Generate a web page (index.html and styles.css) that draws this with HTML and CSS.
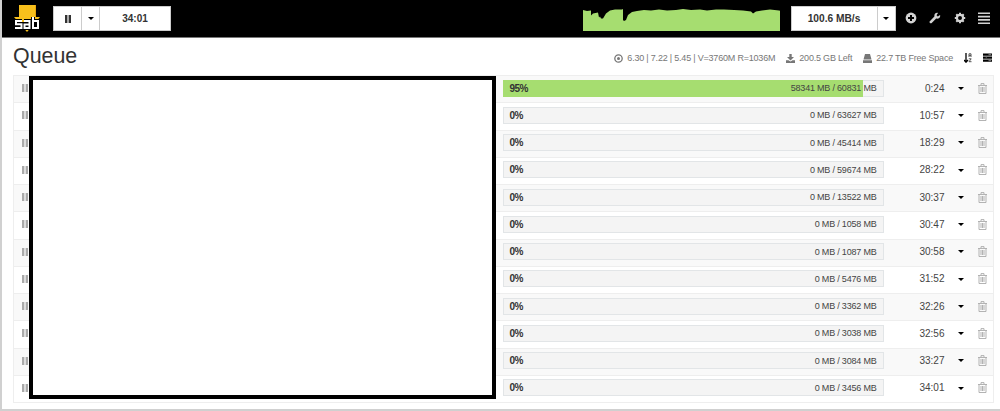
FILE: index.html
```
<!DOCTYPE html>
<html lang="en">
<head>
    <meta charset="UTF-8">
    <meta name="viewport" content="width=device-width, initial-scale=1.0">
    <title>SABnzbd</title>
    <link rel="stylesheet" href="styles.css">
</head>
<body>
    <header class="navbar">
        <svg class="logo" width="26" height="31" viewBox="0 0 26 31">
            <path fill="#f8c01c" d="M5 1h17v12h4L13 28 0 13h5z"/>
            <path fill="#e8a60d" d="M21 1h1v12h-1z"/>
            <path fill="none" stroke="#000" stroke-width="4" d="M8 17H2.500v3H8v4H1M10 17h5.500v7h-5v-3.500h5M19 13v11h5v-7h-5"/>
            <path fill="none" stroke="#fff" stroke-width="2" d="M8 17H2v3.200h5.500V24H1M10 17h5.500v7h-5v-3.500h5M19 13v11h5v-7h-5"/>
        </svg>
        <div class="btn-group">
            <button class="btn pause"><i class="icon-pause"></i></button>
            <button class="btn drop"><i class="caret"></i></button>
            <button class="btn time-left">34:01</button>
        </div>
        <svg class="sparkline" width="197" height="22" viewBox="0 0 197 22">
            <path fill="#a6dd70" d="M0 22V1l4 1 4-.500v5l2-2 5-1 1 5 1-1 1 2h2l3-5 4-3 5-1 7 0V0l1 .500V11l1 1 2-1 2-5 4-3 5-1 7-1 7 .500 8-1 8 1 9-.500 7-1 8 1 9-.500 7 1 9-1 8 0 10 .500 9 .500 8 1 2 2 3-2 6-1 8-1 9 1 7 1 2 2 3-1 5-2 8 0 4 1h4v20z"/>
        </svg>
        <div class="btn-group">
            <button class="btn speed">100.6 MB/s</button>
            <button class="btn drop"><i class="caret"></i></button>
        </div>
        <nav class="menu">
            <svg width="12" height="12" viewBox="0 0 12 12">
                <circle cx="6" cy="6" r="5.400" fill="#d2d2d2"/>
                <path stroke="#000" stroke-width="2" d="M6 3v6M3 6h6"/>
            </svg>
            <svg width="12" height="12" viewBox="0 0 12 12">
                <path fill="#d2d2d2" d="M11 3 8.800 4.500 7.500 3.200 9 1C7 .300 5 2 5.400 4.400L.800 9.200c-1 1 .800 2.800 1.900 1.800l4.500-4.500C9.500 7.300 12 5 11 3z"/>
            </svg>
            <svg width="12" height="12" viewBox="0 0 12 12">
                <circle cx="6" cy="6" r="3.100" fill="none" stroke="#d2d2d2" stroke-width="2.200"/>
                <path stroke="#d2d2d2" stroke-width="2" d="M6 .800v2M6 9.200v2M.800 6h2M9.200 6h2M2.300 2.300l1.400 1.400M8.300 8.300l1.400 1.400M9.700 2.300 8.300 3.700M3.700 8.300 2.300 9.700"/>
            </svg>
            <svg width="12" height="12" viewBox="0 0 12 12">
                <path stroke="#d2d2d2" stroke-width="1.600" d="M0 1.300h12M0 4.600h12M0 7.900h12M0 11.200h12"/>
            </svg>
        </nav>
    </header>

    <main class="queue">
        <div class="queue-header">
            <h2>Queue</h2>
            <ul class="stats">
                <li>
                    <svg width="9" height="9" viewBox="0 0 9 9"><circle cx="4.500" cy="4.500" r="3.700" fill="none" stroke="#777" stroke-width="1.300"/><circle cx="4.500" cy="4.500" r="1.500" fill="#777"/></svg>
                    <span>6.30 | 7.22 | 5.45 | V=3760M R=1036M</span>
                </li>
                <li>
                    <svg width="9" height="9" viewBox="0 0 9 9"><path fill="#777" d="M3.300 0h2.400v3H8L4.500 6.500 1 3h2.300zM0 6.300h2.500l2 1.200 2-1.200H9V9H0z"/></svg>
                    <span>200.5 GB Left</span>
                </li>
                <li>
                    <svg width="9" height="9" viewBox="0 0 9 9"><path fill="#777" d="M2 0h5l1.500 5.500h-8zM0 6.200h9V9H0z"/></svg>
                    <span>22.7 TB Free Space</span>
                </li>
            </ul>
            <svg class="sort" width="8" height="10" viewBox="0 0 8 10">
                <path fill="none" stroke="#000" stroke-width="1.300" d="M2 0v8.500M0 7l2 2.200L4 7"/>
                <path fill="none" stroke="#444" stroke-width=".9" d="M5 4V.800h2V4M5 2.600h2M4.800 5.800h2.400L5 8.700h2.500"/>
            </svg>
            <svg class="tasks" width="9" height="9" viewBox="0 0 9 9">
                <path fill="#000" d="M0 .500h9v2.300H0zM0 3.500h9v2.300H0zM0 6.500h9v2.300H0z"/>
                <path stroke="#aaa" stroke-width=".8" d="M5.500 1.700h2.700M2.800 4.700h.8M5.500 7.700h2.700"/>
            </svg>
        </div>

        <div class="queue-table">
            <table>
                <tbody id="queueItems"></tbody>
            </table>
            <div class="names"></div>
        </div>
    </main>

    <template id="itemTemplate">
        <tr>
            <td class="handle"><i class="icon-pause"></i></td>
            <td class="name"></td>
            <td class="progress-cell">
                <div class="progress">
                    <div class="bar"></div>
                    <strong class="percent"></strong>
                    <span class="size"></span>
                </div>
            </td>
            <td class="eta"></td>
            <td class="more"><i class="caret"></i></td>
            <td class="delete">
                <svg width="9" height="11" viewBox="0 0 9 11">
                    <path fill="none" stroke="#aaa" stroke-width=".9" d="M0 2.500h9M3 2V.600h3V2M1 2.500v8h7v-8M3 4v5M4.500 4v5M6 4v5"/>
                </svg>
            </td>
        </tr>
    </template>
    <script src="queue.js"></script>
</body>
</html>
```

FILE: styles.css
```
* {
    box-sizing: border-box;
}

body {
    margin: 0;
    height: 411px;
    overflow: hidden;
    border-left: 2px solid #d0d0d0;
    border-bottom: 2px solid #d0d0d0;
    background-color: white;
    color: #333;
    font-family: "Liberation Sans", Arial, sans-serif;
    font-size: 10px;
}

svg {
    display: block;
    flex-shrink: 0;
}

.navbar {
    display: flex;
    align-items: flex-start;
    height: 38px;
    padding: 6px 10px 0 12px;
    background-color: black;
    border-bottom: 1px solid #777;
}

.logo {
    margin: -2px 13px 0 0;
}

.btn-group {
    display: flex;
    height: 25px;
    background-color: white;
    border: 1px solid #ccc;
}

.btn {
    display: flex;
    align-items: center;
    justify-content: center;
    padding: 0;
    border: 0;
    background: none;
    color: #333;
    font: bold 10px "Liberation Sans", Arial, sans-serif;
}

.btn + .btn {
    border-left: 1px solid #ccc;
}

.pause {
    width: 27px;
}

.drop {
    width: 18px;
}

.time-left {
    width: 71px;
}

.speed {
    width: 85px;
    font-size: 10.2px;
}

.icon-pause {
    display: block;
    width: 6px;
    height: 8px;
    border: solid #333;
    border-width: 0 2px;
    background-color: #aaa;
}

.caret {
    display: inline-block;
    border: 3px solid transparent;
    border-top-color: black;
    border-bottom: 0;
}

.sparkline {
    margin: 3px 11px 0 auto;
}

.menu {
    display: flex;
    gap: 12.5px;
    margin: 6px 0 0 9px;
}

.queue {
    padding: 0 6px 0 11px;
}

.queue-header {
    display: flex;
    align-items: center;
    height: 37px;
    padding-right: 2px;
}

.queue-header h2 {
    margin: 0 auto 0 0;
    font-size: 21.4px;
    font-weight: normal;
}

.stats {
    display: flex;
    gap: 11px;
    margin: 3px 11px 0 0;
    padding: 0;
    list-style: none;
    color: #777;
    font-size: 9px;
    letter-spacing: -0.2px;
}

.stats li {
    display: flex;
    align-items: center;
    gap: 4px;
    white-space: nowrap;
}

.sort,
.tasks {
    margin-top: 2px;
}

.tasks {
    margin-left: 11px;
}

.queue-table {
    position: relative;
}

table {
    width: 981px;
    height: 328px;
    table-layout: fixed;
    border-collapse: collapse;
    border: 1px solid #eee;
}

tbody tr:nth-child(odd) {
    background-color: #f9f9f9;
}

td {
    padding: 0 0 2px;
    border-top: 1px solid #eee;
}

.handle {
    width: 17px;
    padding-left: 8px;
}

.handle .icon-pause {
    border-color: #aaa;
    background-color: #ddd;
}

.name {
    width: 472px;
}

.progress-cell {
    width: 381px;
}

.progress {
    display: flex;
    position: relative;
    align-items: center;
    justify-content: space-between;
    height: 17px;
    padding: 0 6px;
    background-color: #f4f4f4;
    border: 1px solid #e2e5e7;
}

.bar {
    position: absolute;
    top: -1px;
    bottom: -1px;
    left: -1px;
    background-color: #a6dd70;
}

.percent {
    position: relative;
    font-size: 10px;
    letter-spacing: -0.5px;
}

.size {
    position: relative;
    color: #444;
    font-size: 9px;
    letter-spacing: -0.2px;
}

.eta {
    color: #444;
    text-align: right;
}

.more {
    width: 33px;
    text-align: center;
    line-height: 8px;
}

.more .caret {
    vertical-align: middle;
}

.delete {
    width: 16px;
}

/* Covers the job names and part of the drag handles */
.names {
    position: absolute;
    top: 1px;
    left: 16px;
    width: 467px;
    height: 323px;
    background-color: white;
    border: 4px solid black;
}
```

FILE: queue.js
```
const items = [
    [95, "58341 MB / 60831 MB", "0:24"],
    [0, "0 MB / 63627 MB", "10:57"],
    [0, "0 MB / 45414 MB", "18:29"],
    [0, "0 MB / 59674 MB", "28:22"],
    [0, "0 MB / 13522 MB", "30:37"],
    [0, "0 MB / 1058 MB", "30:47"],
    [0, "0 MB / 1087 MB", "30:58"],
    [0, "0 MB / 5476 MB", "31:52"],
    [0, "0 MB / 3362 MB", "32:26"],
    [0, "0 MB / 3038 MB", "32:56"],
    [0, "0 MB / 3084 MB", "33:27"],
    [0, "0 MB / 3456 MB", "34:01"],
];

const table = document.getElementById("queueItems");
const template = document.getElementById("itemTemplate");

for (const [percent, size, eta] of items) {
    const row = template.content.cloneNode(true);
    row.querySelector(".bar").style.width = percent + "%";
    row.querySelector(".percent").textContent = percent + "%";
    row.querySelector(".size").textContent = size;
    row.querySelector(".eta").textContent = eta;
    table.appendChild(row);
}
```
